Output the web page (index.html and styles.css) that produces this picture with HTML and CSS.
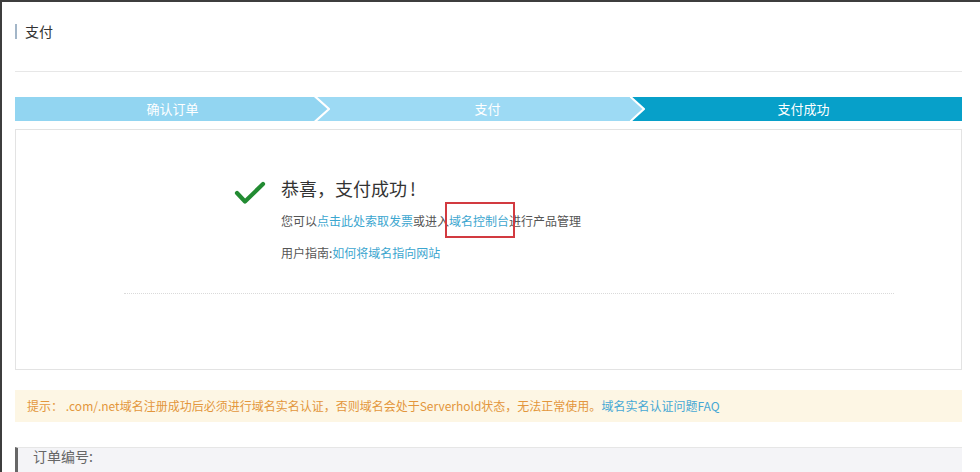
FILE: index.html
```html
<!DOCTYPE html>
<html lang="zh-CN">
<head>
<meta charset="utf-8">
<title>支付</title>
<link rel="stylesheet" href="styles.css">
</head>
<body>
<div class="frame">
  <div class="header">
    <span class="header-bar"></span>
    <span class="header-title">支付</span>
  </div>

  <div class="steps">
    <div class="step step-1">
      <span>确认订单</span>
      <svg class="chev" viewBox="0 0 16 24" width="16" height="24" preserveAspectRatio="none">
        <rect x="0" y="0" width="16" height="24" fill="#9ddaf4"/>
        <polygon points="0,0 15,12 0,24" fill="#92d5f1"/>
        <polyline points="0.5,-1 15,12 0.5,25" fill="none" stroke="#ffffff" stroke-width="2.2"/>
      </svg>
    </div>
    <div class="step step-2">
      <span>支付</span>
      <svg class="chev" viewBox="0 0 16 24" width="16" height="24" preserveAspectRatio="none">
        <rect x="0" y="0" width="16" height="24" fill="#07a0c9"/>
        <polygon points="0,0 15,12 0,24" fill="#9ddaf4"/>
        <polyline points="0.5,-1 15,12 0.5,25" fill="none" stroke="#ffffff" stroke-width="2.2"/>
      </svg>
    </div>
    <div class="step step-3">
      <span>支付成功</span>
    </div>
  </div>

  <div class="card">
    <div class="result">
      <svg class="check" viewBox="0 0 32 24" width="32" height="24">
        <polyline points="3,12 11,20.5 29,3" fill="none" stroke="#228b32" stroke-width="4.2" stroke-linecap="round" stroke-linejoin="round"/>
      </svg>
      <div class="result-text">
        <div class="result-title">恭喜，支付成功<span class="bang">!</span></div>
        <div class="result-line">您可以<a class="link" href="#">点击此处索取发票</a>或进入<a class="link link-marked" href="#">域名控制台<span class="mark"></span></a>进行产品管理</div>
        <div class="result-line result-guide">用户指南:<a class="link" href="#">如何将域名指向网站</a></div>
      </div>
    </div>
    <div class="dotted"></div>
  </div>

  <div class="notice">提示： .com/.net域名注册成功后必须进行域名实名认证，否则域名会处于Serverhold状态，无法正常使用。<a class="link" href="#">域名实名认证问题FAQ</a></div>

  <div class="order">订单编号:</div>
</div>
</body>
</html>
```
FILE: styles.css
```css
html, body {
  margin: 0;
  padding: 0;
  background: #ffffff;
}

body {
  font-family: "Noto Sans CJK SC", "Noto Sans", "Liberation Sans", sans-serif;
  color: #333333;
  overflow: hidden;
}

.frame {
  box-sizing: border-box;
  width: 980px;
  height: 472px;
  border-top: 2px solid #3d3d3d;
  border-left: 2px solid #3d3d3d;
  padding: 0 18px 0 13px;
  overflow: hidden;
}

.header {
  box-sizing: border-box;
  height: 70px;
  padding-top: 19px;
  border-bottom: 1px solid #e7e7e7;
  display: flex;
  align-items: flex-start;
}

.header-bar {
  width: 2px;
  height: 15px;
  margin-top: 3px;
  background: #a3b6c8;
}

.header-title {
  margin-left: 8px;
  font-size: 14px;
  line-height: 20px;
  color: #333333;
}

.steps {
  margin-top: 25px;
  height: 24px;
  display: flex;
}

.step {
  position: relative;
  flex: 0 0 315px;
  height: 24px;
  line-height: 24px;
  font-size: 13px;
  color: #ffffff;
  text-align: center;
}

.step-1 { background: #92d5f1; }
.step-2 { background: #9ddaf4; }
.step-3 { background: #07a0c9; flex: 1 1 auto; }

.step span {
  position: relative;
}

.chev {
  position: absolute;
  top: 0;
  right: 0;
  display: block;
}

.card {
  box-sizing: border-box;
  margin-top: 8px;
  height: 241px;
  border: 1px solid #e3e3e3;
  padding-top: 46px;
}

.result {
  display: flex;
  align-items: flex-start;
  margin-left: 218px;
}

.check {
  display: block;
  margin-top: 5px;
}

.result-text {
  margin-left: 15px;
}

.result-title {
  font-size: 18px;
  line-height: 24px;
  color: #333333;
}

.bang {
  margin-left: 3px;
}

.result-line {
  margin-top: 11px;
  font-size: 12px;
  line-height: 20px;
  color: #555555;
}

.result-guide {
  margin-top: 12px;
}

.link {
  color: #3ba6cf;
  text-decoration: none;
}

.link-marked {
  position: relative;
  display: inline-block;
}

.mark {
  position: absolute;
  top: -9px;
  bottom: -7px;
  left: -4px;
  right: -6px;
  border: 2px solid #d23a40;
}

.dotted {
  margin: 30px 67px 0 108px;
  border-top: 1px dotted #dadada;
}

.notice {
  box-sizing: border-box;
  margin-top: 20px;
  height: 32px;
  line-height: 32px;
  padding-left: 12px;
  background: #fdf6e4;
  font-size: 12px;
  color: #e3963c;
}

.notice .link {
  color: #46a8d4;
}

.order {
  margin-top: 25px;
  height: 40px;
  box-sizing: border-box;
  border-top: 1px solid #e6e6e6;
  border-left: 3px solid #676767;
  background: #f4f4f7;
  padding: 0 0 0 15px;
  font-size: 14px;
  line-height: 16px;
  color: #666666;
}
```
